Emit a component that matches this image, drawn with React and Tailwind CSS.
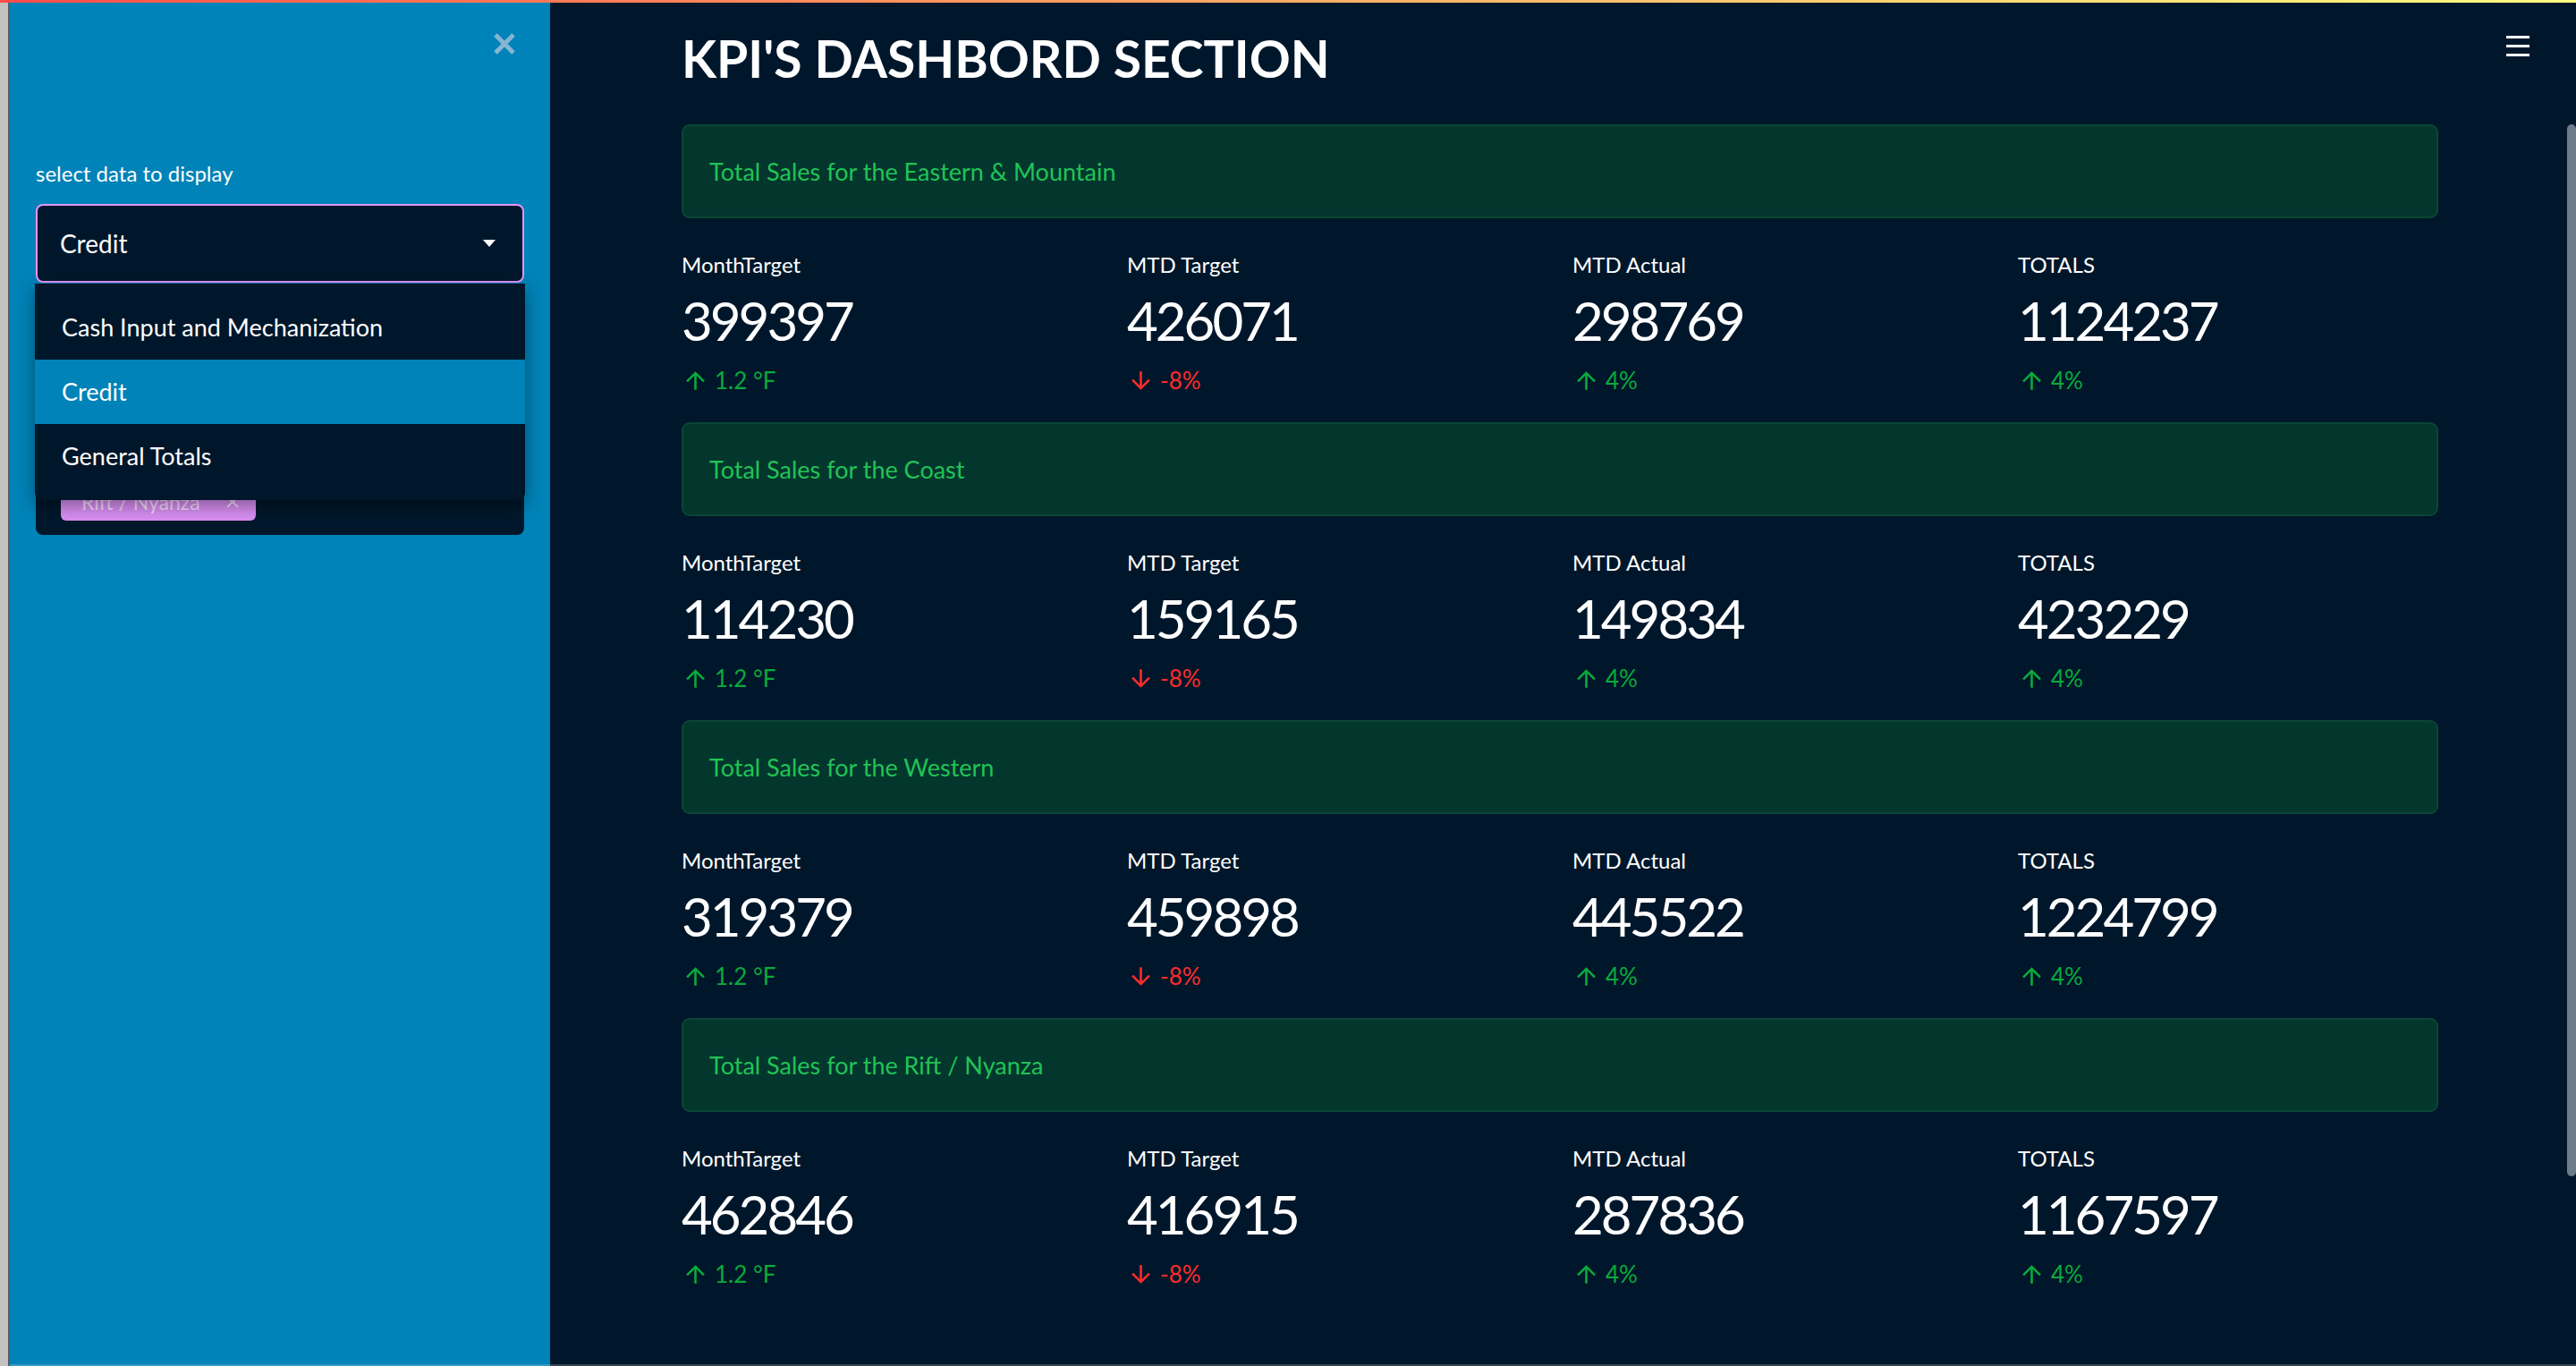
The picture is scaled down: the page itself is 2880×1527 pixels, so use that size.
import React from 'react';

const sections = [
  { title: 'Total Sales for the Eastern & Mountain', values: ['399397', '426071', '298769', '1124237'] },
  { title: 'Total Sales for the Coast', values: ['114230', '159165', '149834', '423229'] },
  { title: 'Total Sales for the Western', values: ['319379', '459898', '445522', '1224799'] },
  { title: 'Total Sales for the Rift / Nyanza', values: ['462846', '416915', '287836', '1167597'] },
];

const labels = ['MonthTarget', 'MTD Target', 'MTD Actual', 'TOTALS'];
const deltas = [
  { up: true, text: '1.2 °F' },
  { up: false, text: '-8%' },
  { up: true, text: '4%' },
  { up: true, text: '4%' },
];

const options = ['Cash Input and Mechanization', 'Credit', 'General Totals'];

function DeltaArrow({ up }) {
  return (
    <svg width="31" height="31" viewBox="0 0 24 24" fill="currentColor">
      {up ? (
        <path d="M4 12l1.41 1.41L11 7.83V20h2V7.83l5.58 5.59L20 12l-8-8-8 8z" />
      ) : (
        <path d="M20 12l-1.41-1.41L13 16.17V4h-2v12.17l-5.58-5.59L4 12l8 8 8-8z" />
      )}
    </svg>
  );
}

function Metric({ label, value, delta }) {
  return (
    <div className="flex flex-col">
      <div className="text-[24px] leading-[32px] text-white">{label}</div>
      <div className="mt-[10px] text-[60px] leading-[72px] tracking-[-3px] text-white">{value}</div>
      <div className={`mt-[15px] flex h-[32px] items-center gap-[6px] text-[26px] leading-[32px] ${delta.up ? 'text-[#09ab3b]' : 'text-[#ff2b2b]'}`}>
        <DeltaArrow up={delta.up} />
        <span>{delta.text}</span>
      </div>
    </div>
  );
}

function Section({ section }) {
  return (
    <div className="flex flex-col">
      <div className="flex h-[105px] items-center rounded-[9px] border-2 border-[#0a4634] bg-[#03372e] px-[29px] text-[27px] leading-[32px] text-[#21c354]">
        {section.title}
      </div>
      <div className="mt-[36px] grid grid-cols-4 gap-[28px]">
        {labels.map((l, i) => (
          <Metric key={l} label={l} value={section.values[i]} delta={deltas[i]} />
        ))}
      </div>
    </div>
  );
}

function Sidebar() {
  return (
    <aside className="relative flex w-[604px] shrink-0 flex-col bg-[#0083b8] px-[29px] pt-[33px]">
      <div className="flex h-[26px] justify-end pr-[9px]">
        <svg width="26" height="26" viewBox="0 0 26 26" stroke="#86b6d2" strokeWidth="5">
          <line x1="3" y1="3" x2="23" y2="23" />
          <line x1="23" y1="3" x2="3" y2="23" />
        </svg>
      </div>
      <div className="mt-[116px] text-[24px] leading-[32px] text-white">select data to display</div>
      <div className="mt-[18px] flex h-[88px] items-center justify-between rounded-[8px] border-2 border-[#e694ff] bg-[#00172b] pl-[25px] pr-[30px]">
        <span className="text-[28px] leading-[32px] text-white">Credit</span>
        <svg width="14" height="8" viewBox="0 0 14 8" fill="white">
          <path d="M0 0h14L7 8z" />
        </svg>
      </div>
      <div className="mt-[84px] flex h-[198px] flex-col justify-end rounded-[8px] bg-[#00172b] pb-[16px] pl-[28px]">
        <div className="flex h-[43px] w-[218px] items-center justify-between rounded-[6px] bg-[#d88ef2] pl-[23px] pr-[16px] text-[23px] leading-[32px] text-[#f6dcfb]">
          <span>Rift / Nyanza</span>
          <svg width="20" height="20" viewBox="0 0 24 24" fill="none" stroke="#f6dcfb" strokeWidth="2.5">
            <path d="M5 5l14 14M19 5L5 19" />
          </svg>
        </div>
      </div>

      <div className="absolute left-[28px] top-[314px] flex h-[242px] w-[548px] flex-col rounded-b-[8px] bg-[#00172b] pt-[13px] shadow-[0_6px_20px_rgba(0,0,0,0.4)]">
        {options.map((o) => (
          <div
            key={o}
            className={`flex h-[72px] items-center pl-[30px] text-[27px] leading-[32px] text-white ${o === 'Credit' ? 'bg-[#0083b8]' : ''}`}
          >
            {o}
          </div>
        ))}
      </div>
    </aside>
  );
}

export default function App() {
  return (
    <div className="relative flex h-[1527px] w-[2880px] flex-col overflow-hidden bg-[#00172b] font-['Lato',sans-serif]">
      <div className="h-[3px] w-full shrink-0 bg-gradient-to-r from-[#ff4b4b] to-[#fffd80]" />
      <div className="flex min-h-0 flex-1">
        <div className="w-[11px] shrink-0 border-r-2 border-[#5a5a5a] bg-[#c2c2c2]" />
        <Sidebar />
        <main className="flex flex-1">
          <div className="ml-[147px] flex w-[1964px] flex-col pt-[27px]">
            <h1 className="text-[57px] font-bold leading-[70px] text-white">KPI'S DASHBORD SECTION</h1>
            <div className="mt-[39px] flex flex-col gap-[31px]">
              {sections.map((s) => (
                <Section key={s.title} section={s} />
              ))}
            </div>
          </div>
          <div className="flex-1" />
          <div className="w-[10px] shrink-0 pt-[136px]">
            <div className="h-[1176px] w-full rounded-full bg-[#6d7a89]" />
          </div>
        </main>
      </div>

      <div className="absolute right-[52px] top-[40px] flex w-[26px] flex-col gap-[7px]">
        <div className="h-[3px] w-full bg-white" />
        <div className="h-[3px] w-full bg-white" />
        <div className="h-[3px] w-full bg-white" />
      </div>
      <div className="absolute bottom-0 left-[11px] right-0 h-[2px] bg-white/20" />
    </div>
  );
}
